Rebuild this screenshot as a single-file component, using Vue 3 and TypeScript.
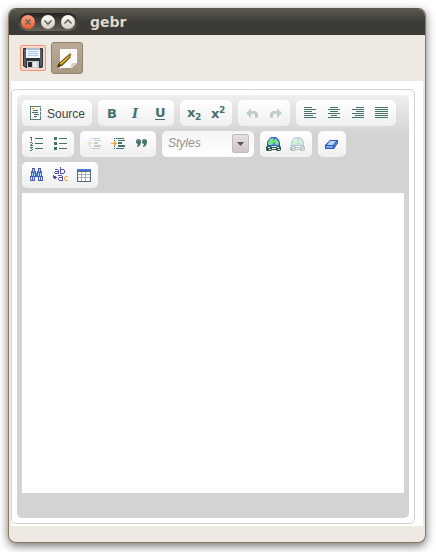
<script setup lang="ts">
import { ref } from 'vue'

interface Tool {
  id: string
  label: string
  off?: boolean
}

const styleName = ref('')
const body = ref('')

const rows: Tool[][][] = [
  [
    [{ id: 'source', label: 'Source' }],
    [
      { id: 'bold', label: 'Bold' },
      { id: 'italic', label: 'Italic' },
      { id: 'underline', label: 'Underline' },
    ],
    [
      { id: 'sub', label: 'Subscript' },
      { id: 'sup', label: 'Superscript' },
    ],
    [
      { id: 'undo', label: 'Undo', off: true },
      { id: 'redo', label: 'Redo', off: true },
    ],
    [
      { id: 'left', label: 'Left Justify' },
      { id: 'center', label: 'Center Justify' },
      { id: 'right', label: 'Right Justify' },
      { id: 'justify', label: 'Block Justify' },
    ],
  ],
  [
    [
      { id: 'numbers', label: 'Numbered List' },
      { id: 'bullets', label: 'Bulleted List' },
    ],
    [
      { id: 'outdent', label: 'Decrease Indent', off: true },
      { id: 'indent', label: 'Increase Indent' },
      { id: 'quote', label: 'Block Quote' },
    ],
    [{ id: 'styles', label: 'Styles' }],
    [
      { id: 'link', label: 'Link' },
      { id: 'unlink', label: 'Unlink', off: true },
    ],
    [{ id: 'eraser', label: 'Remove Format' }],
  ],
  [
    [
      { id: 'find', label: 'Find' },
      { id: 'replace', label: 'Replace' },
      { id: 'table', label: 'Table' },
    ],
  ],
]

const lines: Record<string, string> = {
  left: 'M2 2h8v1H2zM2 4h12v1H2zM2 6h8v1H2zM2 8h12v1H2zM2 10h9v1H2zM2 12h12v1H2z',
  center: 'M4 2h8v1H4zM2 4h12v1H2zM4 6h8v1H4zM2 8h12v1H2zM5 10h6v1H5zM2 12h12v1H2z',
  right: 'M6 2h8v1H6zM2 4h12v1H2zM6 6h8v1H6zM2 8h12v1H2zM5 10h9v1H5zM2 12h12v1H2z',
  justify: 'M1 2h13v1H1zM1 4h13v1H1zM1 6h13v1H1zM1 8h13v1H1zM1 10h13v1H1zM1 12h13v1H1z',
  numbers:
    'M7 2h8v1H7zM7 7h8v1H7zM7 12h8v1H7zM3 1h1v4H3zM2 1h1v1H2zM2 6h2v1H2zM4 7h1v1H4zM3 8h1v1H3zM2 9h3v1H2zM2 11h3v1H2zM3 12h1v1H3zM4 13h1v1H4zM2 14h2v1H2z',
  bullets: 'M7 2h8v1H7zM7 7h8v1H7zM7 12h8v1H7zM2 1h3v3H2zM2 6h3v3H2zM2 11h3v3H2z',
  indent:
    'M4 2h1v1H4zM6 2h8v1H6zM4 4h1v1H4zM8 4h7v1H8zM8 6h4v2H8zM8 9h7v2H8zM4 10h1v1H4zM4 12h1v1H4zM6 12h8v1H6z',
}
lines.outdent = lines.indent
</script>

<template>
  <main class="window">
    <header class="titlebar">
      <div class="controls">
        <button class="dot close" aria-label="Close window">
          <svg viewBox="0 0 14 14"><path d="M4.500 4.500l5 5M9.500 4.500l-5 5" /></svg>
        </button>
        <button class="dot" aria-label="Minimize window">
          <svg viewBox="0 0 14 14"><path d="M3.500 5.500L7 9l3.500-3.500" /></svg>
        </button>
        <button class="dot" aria-label="Maximize window">
          <svg viewBox="0 0 14 14"><path d="M3.500 8.500L7 5l3.500 3.500" /></svg>
        </button>
      </div>
      <h1>gebr</h1>
    </header>

    <nav class="actions" aria-label="Document">
      <button class="save" aria-label="Save">
        <svg width="20" height="20" viewBox="0 0 20 20">
          <path d="M1 0h18q1 0 1 1v17q0 2-2 2H3L0 18V1q0-1 1-1z" fill="#30343a" />
          <path d="M1 1h2v17H1zM17 1h2v17h-2z" fill="#555b64" />
          <path d="M3 0h14v10H3z" fill="#f1f5f8" />
          <path d="M3 0h14v2H3z" fill="#a9bfd3" />
          <path d="M5 3h10v1H5zM5 5h10v1H5zM5 7h10v1H5z" fill="#a8c7e5" />
          <path d="M4 13h12v7H4z" fill="#c7cace" />
          <path d="M5 14h4v5H5z" fill="#25282d" />
          <path d="M10 14h4v5h-4z" fill="#e8e9eb" />
        </svg>
      </button>
      <button class="edit" aria-label="Edit" aria-pressed="true">
        <svg width="22" height="22" viewBox="0 0 22 22">
          <path d="M4.500 2.500h16v14l-5 5h-11z" fill="#fafaf8" stroke="#fff" />
          <path d="M20.500 16.500l-5 5 .5-4.500z" fill="#dedcd8" stroke="#b6b0a5" stroke-width=".7" />
          <path d="M5 21.500h10" stroke="#9e907d" />
          <path d="M1 20l2-4 9-8 3 2-9 9z" fill="#5c4610" />
          <path d="M4 16.500l8.500-7.500 1 1-8.500 8z" fill="#f2c433" />
          <path d="M1 20l1.500-3L5 19z" fill="#40320e" />
          <path d="M12 8l2-2 1.500 2-2 2z" fill="#927329" />
        </svg>
      </button>
    </nav>

    <section class="page">
      <div class="editor">
        <div class="chrome">
          <div class="tools" role="toolbar" aria-label="Formatting">
            <div v-for="(row, r) in rows" :key="r" class="row">
              <template v-for="group in row" :key="group[0].id">
                <div v-if="group[0].id === 'styles'" class="combo">
                  <select v-model="styleName" aria-label="Styles">
                    <option value="">Styles</option>
                  </select>
                  <span class="arrow">
                    <svg width="7" height="4" viewBox="0 0 7 4"><path d="M0 0h7L3.500 4z" fill="#555" /></svg>
                  </span>
                </div>
                <div v-else class="group">
                  <button
                    v-for="tool in group"
                    :key="tool.id"
                    class="tool"
                    :class="{ off: tool.off, labelled: tool.id === 'source' }"
                    :disabled="tool.off"
                    :aria-label="tool.label"
                  >
                    <svg class="icon" width="16" height="16" viewBox="0 0 16 16">
                      <g v-if="tool.id === 'source'" shape-rendering="crispEdges">
                        <path d="M2 1h11v14H2z" fill="#5b7a78" />
                        <path d="M3 2h9v12H3z" fill="#fff" />
                        <path d="M12 2h1v1h-1zM12 6h1v1h-1zM12 10h1v1h-1z" fill="#c5d1d0" />
                        <path d="M4 3h3v1H4z" fill="#f5a63b" />
                        <path d="M5 5h5v1H5zM4 7h6v1H4zM6 9h5v1H6zM6 11h3v1H6z" fill="#476c68" />
                        <path d="M9 3h2v1H9zM4 12h4v1H4z" fill="#d5dfdd" />
                      </g>
                      <text v-else-if="tool.id === 'bold'" class="glyph" x="3" y="13">B</text>
                      <text v-else-if="tool.id === 'italic'" class="glyph slant" x="4" y="13">I</text>
                      <g v-else-if="tool.id === 'underline'">
                        <text class="glyph" x="3" y="12">U</text>
                        <path d="M3 14h10v1H3z" fill="#46706c" />
                      </g>
                      <g v-else-if="tool.id === 'sub'">
                        <text class="glyph" x="1" y="12">x</text>
                        <text class="glyph small" x="9" y="15">2</text>
                      </g>
                      <g v-else-if="tool.id === 'sup'">
                        <text class="glyph" x="1" y="13">x</text>
                        <text class="glyph small" x="9" y="8">2</text>
                      </g>
                      <path
                        v-else-if="tool.id === 'undo'"
                        d="M2 8l5-5v3h3q4 0 4 4v3h-3v-2q0-2-2-2H7v4z"
                        fill="#46706c"
                      />
                      <path
                        v-else-if="tool.id === 'redo'"
                        d="M14 8L9 3v3H6q-4 0-4 4v3h3v-2q0-2 2-2h2v4z"
                        fill="#46706c"
                      />
                      <g v-else-if="tool.id === 'quote'" fill="#46706c">
                        <path d="M2 5q0-2 2.500-2T7 5.500Q7 9 4 11H3l1-3Q2 8 2 5zM8 5q0-2 2.500-2T13 5.500Q13 9 10 11H9l1-3Q8 8 8 5z" />
                        <path d="M3 4h2v1H3zM9 4h2v1H9z" fill="#78958f" />
                      </g>
                      <g v-else-if="tool.id === 'link' || tool.id === 'unlink'">
                        <path d="M5 1h5l3 3 1 3v3H1V6l2-3z" fill="#355dcc" />
                        <path d="M5 2h5l2 3 1 4H2V6l2-3z" fill="#598be8" />
                        <path d="M4 3l3-1v2l1 1-2 4H3L2 7zM9 3l2 1 2 3-2 3-1-2-2-2z" fill="#75ec75" />
                        <path d="M1 10h4l1 1h4l1-1h3l1 1v3l-1 1h-3l-1-1H6l-1 1H1l-1-1v-3z" fill="#315752" />
                        <path d="M2 11h2v1H2zM3 13h2v1H3zM6 12h4v1H6zM11 11h2v1h-2zM12 13h2v1h-2z" fill="#e4f2ec" />
                      </g>
                      <g v-else-if="tool.id === 'eraser'">
                        <path d="M6 4h8v3l-4 6H1V9z" fill="#3455c5" />
                        <path d="M6 5h6l-3 4H3z" fill="#b4d9f5" />
                        <path d="M2 10h7v2H2z" fill="#75a7ec" />
                        <path d="M10 9l3-4v2l-3 4z" fill="#608add" />
                      </g>
                      <g v-else-if="tool.id === 'find'" shape-rendering="crispEdges">
                        <path
                          d="M4 1h3v3h1v2h1V4h1V1h3v3h1v5h1v5h-5v-4H7v4H2V9h1V4h1z"
                          fill="#485cbb"
                        />
                        <path d="M5 2h1v3H5zM4 6h1v3H4zM6 6h1v3H6zM11 2h1v3h-1zM10 6h1v3h-1zM12 6h1v3h-1z" fill="#a9dcf2" />
                        <path d="M3 10h1v3H3zM5 10h1v3H5zM11 10h1v3h-1zM13 10h1v3h-1z" fill="#dceffd" />
                        <path d="M8 7h1v1H8z" fill="#79a3df" />
                      </g>
                      <g v-else-if="tool.id === 'replace'" shape-rendering="crispEdges">
                        <path
                          d="M3 2h3v1H3zM6 3h1v4H6zM3 4h3v1H3zM2 5h1v1H2zM3 6h3v1H3zM8 0h1v7H8zM9 2h3v1H9zM12 3h1v3h-1zM9 6h3v1H9zM6 8h4v1H6zM10 9h1v5h-1zM7 10h3v1H7zM6 11h1v2H6zM7 13h3v1H7zM1 8h1v2H1zM1 10h4v1H1zM2 9h1v3H2zM3 9h1v3H3z"
                          fill="#5552b8"
                        />
                        <path d="M13 9h3v1h-3zM12 10h1v3h-1zM13 13h3v1h-3z" fill="#f5a63b" />
                      </g>
                      <g v-else-if="tool.id === 'table'" shape-rendering="crispEdges">
                        <path d="M1 2h14v13H1z" fill="#536c70" />
                        <path d="M1 2h14v2H1z" fill="#4179dc" />
                        <path d="M2 5h12v9H2z" fill="#fff" />
                        <path d="M2 7h12v1H2zM2 10h12v1H2zM5 5h1v9H5zM9 5h1v9H9z" fill="#a5b2b4" />
                      </g>
                      <g v-else shape-rendering="crispEdges">
                        <path :d="lines[tool.id]" fill="#46706c" />
                        <path v-if="tool.id === 'indent'" d="M1 7h3V5h1v1h1v1h1v1H6v1H5v1H4V8H1z" fill="#f5a63b" />
                        <path v-if="tool.id === 'outdent'" d="M1 7h1V6h1V5h1v2h3v1H4v2H3V9H2V8H1z" fill="#f5a63b" />
                      </g>
                    </svg>
                    <span v-if="tool.id === 'source'" class="caption">Source</span>
                  </button>
                </div>
              </template>
            </div>
          </div>
          <textarea v-model="body" aria-label="Content"></textarea>
        </div>
      </div>
    </section>
  </main>
</template>

<style>
body {
  background: #fff;
}
</style>

<style scoped>
.window {
  margin: 8px 10px 9px 8px;
  border: 1px solid #8b795d;
  border-top-color: #5b584a;
  border-radius: 8px;
  overflow: hidden;
  background: #eeeae3;
  box-shadow: 0 3px 10px rgba(0, 0, 0, 0.55);
  font-family: "Liberation Sans", sans-serif;
}
button {
  font: inherit;
  padding: 0;
  border: 0;
  background: none;
}
.titlebar {
  height: 26px;
  padding-left: 9px;
  display: flex;
  align-items: center;
  gap: 12px;
  background: linear-gradient(#5b594f, #3c3b37 50%);
}
.controls {
  display: flex;
  align-items: center;
  gap: 6px;
  height: 18px;
  padding: 0 3px;
  border-radius: 9px;
  background: linear-gradient(#242420, #65635b);
}
.dot {
  width: 14px;
  height: 14px;
  border-radius: 50%;
  background: linear-gradient(#fffefa, #d2cdc2);
}
.dot svg {
  display: block;
  fill: none;
  stroke: #67645d;
  stroke-width: 1.6;
}
.dot.close {
  background: linear-gradient(#fba17b, #ec5e30);
}
h1 {
  margin: 0;
  font: bold 14px/18px "DejaVu Sans", sans-serif;
  color: #dfd8c8;
}
.actions {
  display: flex;
  align-items: center;
  gap: 5px;
  height: 46px;
  padding: 0 11px;
}
.save,
.edit {
  display: grid;
  place-items: center;
}
.save {
  width: 26px;
  height: 26px;
  border: 1px solid #fa917b;
  border-radius: 2px;
  background: #f7d9cc;
}
.edit {
  width: 32px;
  height: 32px;
  border: 1px solid #8f816e;
  border-radius: 3px;
  background: linear-gradient(#b9aa95, #aa9a84);
}
.page {
  margin: 0 2px 16px;
  padding: 8px 8px 2px 0;
  background: #fff;
}
.editor {
  padding: 5px;
  border: 1px solid #d3d3d3;
  border-radius: 5px;
}
.chrome {
  padding: 5px 5px 25px;
  border-radius: 5px;
  background: #d3d3d3 linear-gradient(#efefef, #d3d3d3) no-repeat 0 0 / 100% 40px;
}
.tools {
  display: grid;
  gap: 5px;
  margin-bottom: 5px;
}
.row {
  display: flex;
  gap: 6px;
}
.group {
  display: flex;
  height: 26px;
  padding: 0 2px;
  border-radius: 5px;
  background: linear-gradient(#fff, #efefef);
}
.tool {
  display: flex;
  align-items: center;
  gap: 3px;
  padding: 0 4px;
  font-size: 12px;
  color: #444;
}
.tool.labelled {
  padding-right: 5px;
}
.caption {
  padding-top: 2px;
}
.tool.off .icon {
  opacity: 0.3;
}
.icon {
  display: block;
}
.glyph {
  font: bold 13px "DejaVu Sans", sans-serif;
  fill: #46706c;
}
.glyph.slant {
  font: italic bold 13px "DejaVu Serif", serif;
}
.glyph.small {
  font-size: 9px;
}
.combo {
  display: flex;
  align-items: center;
  width: 92px;
  height: 26px;
  position: relative;
  border-radius: 5px;
  background: linear-gradient(#f4f4f4, #fff);
}
.combo select {
  appearance: none;
  width: 100%;
  height: 26px;
  padding: 0 26px 2px 6px;
  border: 0;
  background: none;
  font: italic 12px "Liberation Sans", sans-serif;
  color: #929292;
}
.arrow {
  position: absolute;
  top: 3px;
  right: 5px;
  display: grid;
  place-items: center;
  width: 17px;
  height: 19px;
  border-radius: 3px;
  background: linear-gradient(#e9e2e2, #cdc4c4);
  box-shadow: inset 0 0 0 1px #c4baba;
  pointer-events: none;
}
textarea {
  display: block;
  box-sizing: border-box;
  width: 100%;
  height: 300px;
  padding: 8px;
  border: 0;
  outline: 0;
  resize: none;
  background: #fff;
}
</style>
